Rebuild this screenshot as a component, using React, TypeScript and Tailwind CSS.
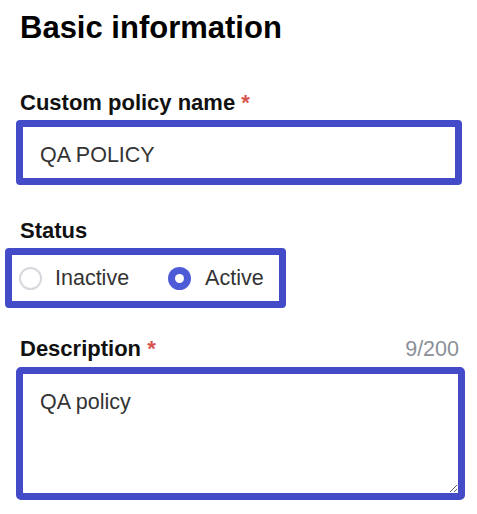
export default function App() {
  return (
    <div className="min-h-screen bg-white font-['Liberation_Sans',Arial,sans-serif] text-[#111]">
      <div className="flex flex-col px-[16px] pt-[10px]">
        {/* Header */}
        <h1 className="pl-[4px] text-[31px] font-bold leading-[36px] text-black">Basic information</h1>

        {/* Policy name */}
        <label className="mt-[45px] pl-[4px] text-[22px] font-bold leading-[24px]">
          Custom policy name <span className="text-[#d9534f]">*</span>
        </label>
        <input
          readOnly
          value="QA POLICY"
          className="mt-[5px] h-[65px] w-[446px] rounded-[4px] border-[7px] border-[#434bc9] bg-white px-[17px] pt-[5px] text-[21.5px] text-[#333] outline-none"
        />

        {/* Status */}
        <div className="mt-[34px] pl-[4px] text-[22px] font-bold leading-[24px]">Status</div>
        <div className="-ml-[11px] mt-[5px] flex h-[60px] w-[281px] items-center rounded-[4px] border-[7px] border-[#434bc9] pl-[7px] text-[21.5px] text-[#333]">
          <span className="h-[23px] w-[23px] rounded-full border-2 border-[#d5d8dd]" />
          <span className="ml-[13px]">Inactive</span>
          <span className="ml-[39px] flex h-[23px] w-[23px] items-center justify-center rounded-full bg-[#4e5bd6]">
            <span className="h-[9px] w-[9px] rounded-full bg-white" />
          </span>
          <span className="ml-[14px]">Active</span>
        </div>

        {/* Description */}
        <div className="mt-[29px] flex items-baseline justify-between pl-[4px] pr-[2px] leading-[24px]">
          <span className="text-[22px] font-bold">
            Description <span className="text-[#d9534f]">*</span>
          </span>
          <span className="text-[21.5px] text-[#8b9099]">9/200</span>
        </div>
        <textarea
          readOnly
          value="QA policy"
          className="mt-[6px] h-[133px] w-[449px] rounded-[5px] border-[7px] border-[#434bc9] bg-white px-[17px] pt-[16px] text-[21.5px] leading-[24px] text-[#333] outline-none"
        />
      </div>
    </div>
  );
}
